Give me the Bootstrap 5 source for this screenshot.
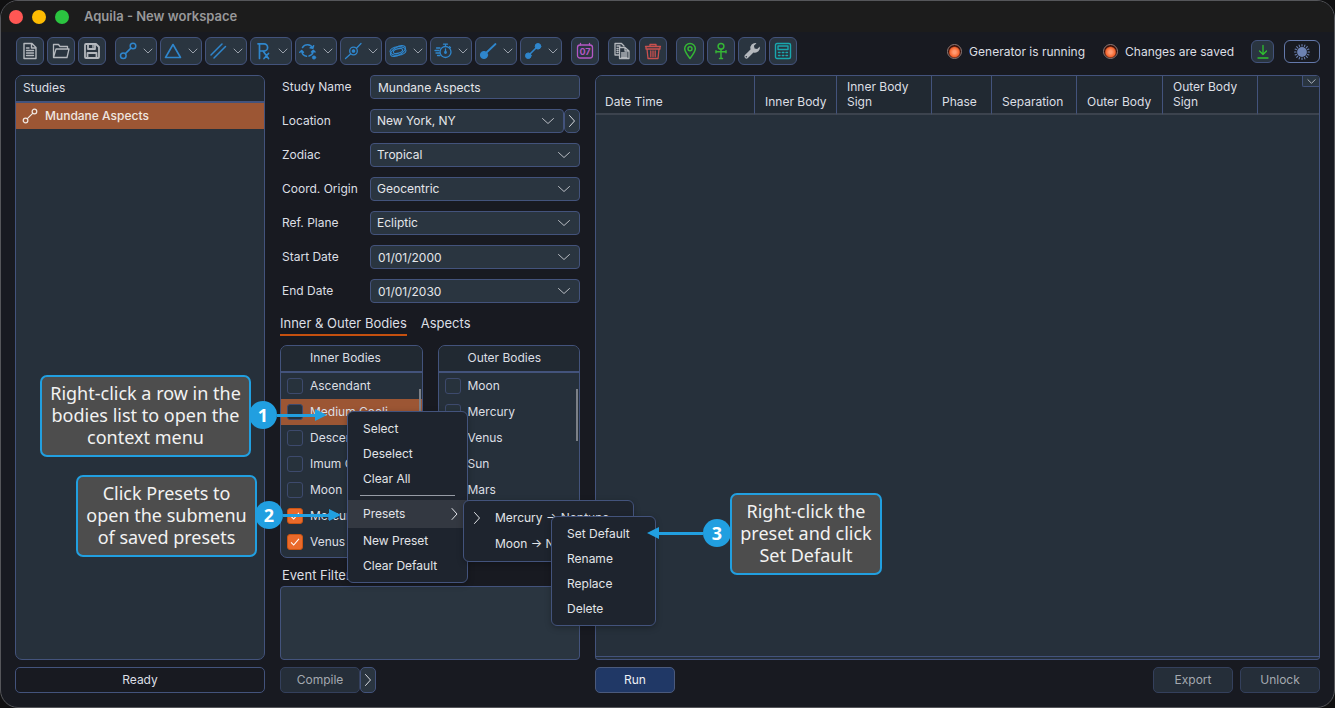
<!DOCTYPE html>
<html lang="en" data-bs-theme="dark">
<head>
<meta charset="utf-8">
<meta name="viewport" content="width=device-width, initial-scale=1">
<title>Aquila - New workspace</title>
<link href="https://cdn.jsdelivr.net/npm/bootstrap@5.3.0/dist/css/bootstrap.min.css" rel="stylesheet">
<style>
:root{--line:#43537c;--ink:#dcdfe4;--panel:#26303b;--head:#212932;--field:#2a3540;--app:#181a21;--accent:#9c5634;--tip:#219fe0}
body{background:#101011;color:var(--ink);font:12px/20px Inter,"Liberation Sans",sans-serif}
svg{display:block;fill:none;stroke:currentColor;stroke-linecap:round;stroke-linejoin:round}
button,input,select,textarea{font:inherit}
.app-window{min-height:100vh;background:var(--app);border:1px solid #55565a;border-radius:18px;overflow:hidden}
.titlebar{height:31px;background:#1c1c1c;padding-left:8px;color:#98989a;font-size:13px;font-weight:600}
.light{width:14px;height:14px;border-radius:50%;margin-right:9px}
.window-title{margin-left:6px;line-height:16px;padding-bottom:1px}
.toolbar{padding:5px 14px 0 15px;gap:9px;height:34px}
.tool-group{display:flex;gap:3px}
.tool{width:28px;height:28px;padding:0;border:1px solid var(--line);border-radius:6px;background:var(--field);color:#b4b8bd;display:flex;align-items:center;justify-content:center}
.tool.drop{width:42px;gap:6px;color:#2f86cc}
.tool .chev{color:#9aa1ab}
.tool.small-tool{width:23px;height:23px;color:#2fc02f;margin:0 10px 0 17px}
.tool.theme-tool{width:36px;height:23px;background:var(--app);border-color:#6479ab;color:#6d82b3}
.led{width:15px;height:15px;border-radius:50%;border:1px solid #8d7a76;background:radial-gradient(circle at 50% 55%,#ff9a70 0 15%,#f4652f 48%,#3a100a 62%);margin-right:7px}
.led + span + .led{margin-left:18px}
.workspace{display:grid;grid-template-columns:250px 300px minmax(0,1fr);grid-template-rows:1fr 26px;gap:7px 15px;padding:9px 14px 14px}
.pane{background:var(--panel);border:1px solid var(--line);border-radius:7px;overflow:hidden}
.pane-head{background:var(--head);border-bottom:2px solid var(--line);height:27px;line-height:24px;padding-left:7px}
.study{height:26px;background:var(--accent);color:#efe6e0;font-weight:500;padding-left:6px;gap:7px;width:100%;border:0;text-align:left}
.form-line{display:grid;grid-template-columns:88px minmax(0,1fr);padding-left:2px;height:24px;margin-bottom:10px}
.form-line label{line-height:23px}
.field{height:24px;min-height:24px;padding:0 6px 0 7px;border:1px solid var(--line);border-radius:4px;background-color:var(--field);color:#e4e6ea;font-size:12px;line-height:20px}
.field.form-select{background-image:url("data:image/svg+xml,%3csvg xmlns='http://www.w3.org/2000/svg' viewBox='0 0 14 14'%3e%3cpath fill='none' stroke='%23b8bcc2' stroke-linecap='round' d='M1.500 4.500l5.500 5 5.500-5'/%3e%3c/svg%3e");background-position:right 8px center;background-size:14px 14px;padding-right:26px}
select.field.form-select{padding-left:6px}
.side-btn{width:16px;padding:0;border:1px solid var(--line);border-radius:5px;background:var(--field);color:#d8dbe0;display:flex;align-items:center;justify-content:center}
.view-tabs{gap:14px;margin-top:2px;height:26px;font-size:13px}
.view-tabs a{color:var(--ink);text-decoration:none;line-height:16px;height:21px;border-bottom:2px solid transparent}
.view-tabs a.active{border-color:#c5500f}
.body-list{height:213px;position:relative;flex:1 1 0}
.body-list .pane-head{padding-left:29px}
.body-row{height:26px;padding-left:6px;gap:7px}
.body-row.current{background:var(--accent)}
.body-row .form-check-input{width:16px;height:16px;margin:0;border:1px solid #3d4a6d;border-radius:3px;background-color:#27323c;flex:none}
.body-row .form-check-input:checked{background-color:#ea6a2b;border-color:#c95413;background-image:url("data:image/svg+xml,%3csvg xmlns='http://www.w3.org/2000/svg' viewBox='0 0 16 16'%3e%3cpath fill='none' stroke='%23fff' stroke-width='1.200' d='M3.500 8.500l3 3 6-7'/%3e%3c/svg%3e")}
.scroll-thumb{position:absolute;right:1px;top:43px;width:2px;height:52px;background:#7c8087}
.filter-label{font-size:13px;line-height:20px;padding:7px 0 1px 2px;display:block}
.filter-box{flex:1 1 auto;resize:none;border-radius:4px;background:var(--field);border:1px solid var(--line)}
.pop{position:absolute;background:#1e242e;border:1px solid var(--line);border-radius:6px;padding:4px 0;margin:0;list-style:none;box-shadow:0 2px 6px rgba(0,0,0,.25);z-index:5}
.pop li{position:relative}
.pop button{display:flex;align-items:center;width:100%;height:25px;border:0;background:none;color:#e2e4e8;padding:0 0 0 15px;text-align:left;white-space:nowrap}
.pop hr{margin:4px 12px;border-color:#969ba5;opacity:1}
.pop-context{left:67px;top:66px;width:121px}
.pop-context .opened{height:28px;background:#333841;justify-content:space-between;padding-right:8px}
.pop-presets{left:115px;top:0;width:171px}
.pop-presets > li > button{height:26px;padding-left:7px;gap:12px}
.pop-presets svg{flex:none;width:12px}
.pop-preset{left:87px;top:11px;width:105px}
.results{display:flex;flex-direction:column;border-radius:7px 4px 3px 3px;position:relative}
.results-table{table-layout:fixed;width:100%;border-collapse:separate;border-spacing:0}
.results-table th{height:39px;background:var(--head);border-right:1px solid var(--line);border-bottom:2px solid #3c434e;font-weight:400;vertical-align:bottom;line-height:15px;padding:0 4px 4px 10px}
.results-table th:first-child{padding-left:9px}
.results-table th:last-child{border-right:0}
.results-end{margin-top:auto;border-top:1px solid var(--line);height:3px}
.column-btn{position:absolute;right:0;top:0;width:17px;height:11px;padding:0;border:1px solid var(--line);border-width:0 0 1px 1px;border-radius:0 0 0 2px;background:var(--field);color:#c0c4ca;display:flex;justify-content:center;align-items:center}
.foot-btn{width:80px;height:26px;padding:0;line-height:22px;border:1px solid #34405c;border-radius:5px;background:#252e39;color:#a4a9b0}
.foot-btn:hover{background:#2a3540}
.run-btn{background:#203866;border-color:#4b5a7c;color:#edf0f5}
.status{border:1px solid var(--line);border-radius:5px;text-align:center;line-height:23px}
.tip{position:absolute;z-index:10;background:#4d4d4d;border:2px solid var(--tip);border-radius:7px;color:#f2f2f2;font:18px/22px "Noto Sans","Open Sans",sans-serif;text-align:center;white-space:nowrap;height:82px;padding-top:5px}
.tip-mark{position:absolute;z-index:11;display:flex;align-items:center;color:var(--tip)}
.tip-mark b{width:28px;height:28px;border-radius:50%;background:var(--tip);color:#fff;font:700 18px/28px "Open Sans","Noto Sans",sans-serif;text-align:center}
.tip-mark i{height:3px;background:var(--tip)}
.tip-mark svg{fill:currentColor;stroke:none}
</style>
</head>
<body>
<svg width="0" height="0" class="position-absolute" aria-hidden="true">
  <symbol id="down" viewBox="0 0 10 10"><path d="M1 3l4 4 4-4"/></symbol>
  <symbol id="right" viewBox="0 0 8 14"><path d="M1.500 1.500L6.500 7l-5 5.500"/></symbol>
</svg>
<div class="app-window d-flex flex-column position-relative">
  <header class="titlebar d-flex align-items-center">
    <span class="light" style="background:#ff5754"></span><span class="light" style="background:#fdbc02"></span><span class="light" style="background:#2bc440"></span>
    <span class="window-title">Aquila - New workspace</span>
  </header>

  <nav class="toolbar d-flex" aria-label="Tools">
    <div class="tool-group">
      <button class="tool" aria-label="New"><svg width="18" height="18" viewBox="0 0 18 18" stroke-width="1.400"><path d="M3 1.500h8l4 4v11H3zM10.500 1.500V6H15M5.500 8.500h7M5.500 11h7M5.500 13.500h7M5.500 6h2.500"/></svg></button>
      <button class="tool" aria-label="Open"><svg width="18" height="18" viewBox="0 0 18 18" stroke-width="1.300"><path d="M1.500 15.500V2.500h5l1.500 2h7.500V7M1.500 15.500L4 7h13l-2 8.500z"/></svg></button>
      <button class="tool" aria-label="Save"><svg width="18" height="18" viewBox="0 0 18 18" stroke-width="1.800"><path d="M3 2h10l3 3v10q0 1-1 1H3q-1 0-1-1V3q0-1 1-1z"/><path d="M5 2v5h7V2M4.500 16v-5h9v5"/><path d="M10 3v2.500" stroke-width="1.400"/></svg></button>
    </div>
    <div class="tool-group">
      <button class="tool drop" aria-label="Aspects"><svg width="18" height="18" viewBox="0 0 18 18" stroke-width="1.500"><circle cx="4.300" cy="13.700" r="2.800"/><circle cx="14" cy="4" r="2.800"/><path d="M6.400 11.600l5.500-5.500"/></svg><svg class="chev" width="10" height="10"><use href="#down"/></svg></button>
      <button class="tool drop" aria-label="Triangle"><svg width="18" height="18" viewBox="0 0 18 18" stroke-width="1.600"><path d="M9 2.500L16.500 15.500h-15z"/></svg><svg class="chev" width="10" height="10"><use href="#down"/></svg></button>
      <button class="tool drop" aria-label="Parallels"><svg width="18" height="18" viewBox="0 0 18 18" stroke-width="1.500"><path d="M2 13L13 2M5 16L16.500 4.500"/></svg><svg class="chev" width="10" height="10"><use href="#down"/></svg></button>
      <button class="tool drop" aria-label="Retrogrades"><svg width="18" height="18" viewBox="0 0 18 18" stroke-width="1.700"><path d="M5.500 16.500V1.800h4.500a3.600 3.600 0 010 7.200H5.500M9 9l5.500 7.500M14.500 11.500l-4.500 5M4 1.800h1.500"/></svg><svg class="chev" width="10" height="10"><use href="#down"/></svg></button>
      <button class="tool drop" aria-label="Cycles"><svg width="18" height="18" viewBox="0 0 18 18" stroke-width="1.500"><path d="M3.500 5.500A5.800 5.800 0 0113.600 6M14.300 8.500A5.800 5.800 0 0110 14M7.500 14.300A5.800 5.800 0 012.700 9M11.200 5.800l2.600.5.800-2.600M.8 10.300l1.900-1.800 1.700 1.800M12.500 10l1.800-1.800L16 10"/><circle cx="15" cy="15.500" r="1.800" fill="currentColor" stroke-width=".5"/></svg><svg class="chev" width="10" height="10"><use href="#down"/></svg></button>
      <button class="tool drop" aria-label="Crossings"><svg width="18" height="18" viewBox="0 0 18 18" stroke-width="1.300"><circle cx="9.500" cy="9" r="3.800"/><circle cx="9.500" cy="9" r="1.200" fill="currentColor"/><path d="M1.500 16.500l5-4.500M12.500 6.200l4.500-4.700"/></svg><svg class="chev" width="10" height="10"><use href="#down"/></svg></button>
      <button class="tool drop" aria-label="Orbits"><svg width="18" height="18" viewBox="0 0 18 18" stroke-width="1.100"><ellipse cx="9" cy="9" rx="8" ry="4.300" transform="rotate(-4 9 9)"/><ellipse cx="9" cy="9" rx="8.300" ry="4" transform="rotate(-30 9 9)"/><ellipse cx="9" cy="9" rx="4.800" ry="2.200" transform="rotate(-16 9 9)"/></svg><svg class="chev" width="10" height="10"><use href="#down"/></svg></button>
      <button class="tool drop" aria-label="Speed"><svg width="18" height="18" viewBox="0 0 18 18" stroke-width="1.300"><circle cx="11.500" cy="10" r="5.500"/><path d="M11.500 4.500V2.500M9.500 2.200h4M11.500 7v3M15.500 4.800l1 1M2.500 6H6M1 8.500h4M2 11h3.500M3.500 13.500H6"/><circle cx="11.500" cy="10.500" r=".8"/></svg><svg class="chev" width="10" height="10"><use href="#down"/></svg></button>
      <button class="tool drop" aria-label="Single body"><svg width="18" height="18" viewBox="0 0 18 18" stroke-width="1.800"><circle cx="5" cy="13" r="3.600" fill="currentColor" stroke-width="1"/><path d="M7 11l9.500-9"/></svg><svg class="chev" width="10" height="10"><use href="#down"/></svg></button>
      <button class="tool drop" aria-label="Two bodies"><svg width="18" height="18" viewBox="0 0 18 18" stroke-width="1.600"><circle cx="4.300" cy="13.700" r="2.800" fill="currentColor" stroke-width="1"/><circle cx="14" cy="4.300" r="2.800" fill="currentColor" stroke-width="1"/><path d="M6 12l6-6"/></svg><svg class="chev" width="10" height="10"><use href="#down"/></svg></button>
    </div>
    <div class="tool-group">
      <button class="tool" aria-label="Calendar" style="color:#b457c4"><svg width="18" height="18" viewBox="0 0 18 18" stroke-width="1.300"><rect x="1.500" y="3" width="15" height="13" rx="2.500"/><path d="M4.500 1.500V3M13.500 1.500V3"/><text x="9" y="12.800" font-size="9" font-weight="700" text-anchor="middle" fill="currentColor" stroke="none">07</text></svg></button>
    </div>
    <div class="tool-group">
      <button class="tool" aria-label="Copy"><svg width="18" height="18" viewBox="0 0 18 18" stroke-width="1.300"><path d="M6 13H2V1.500h6.500L11 4"/><path d="M6.500 5.500H12L16 9v7.500H6.500zM12 5.500V9h4M8.500 11h5.500M8.500 13h5.500M8.500 15H14M4 4h3M4 6.500h1M4 8.500h1M4 10.500h1"/></svg></button>
      <button class="tool" aria-label="Delete study" style="color:#c9504e"><svg width="18" height="18" viewBox="0 0 18 18" stroke-width="1.300"><path d="M1.500 4.500h15M6 4.500V2.500h6v2M3 7l1 9.500h10L15 7zM6.800 9v5.500M9 9v5.500M11.200 9v5.500M2 4.500V7h14V4.500"/></svg></button>
    </div>
    <div class="tool-group">
      <button class="tool" aria-label="Locations" style="color:#35b535"><svg width="18" height="18" viewBox="0 0 18 18" stroke-width="1.500"><path d="M9 16.500C6 12.500 3.700 9.500 3.700 6.700a5.300 5.300 0 0110.600 0C14.300 9.500 12 12.500 9 16.500z"/><circle cx="9" cy="6.700" r="2"/></svg></button>
      <button class="tool" aria-label="Bodies" style="color:#35b535"><svg width="18" height="18" viewBox="0 0 18 18" stroke-width="1.500"><circle cx="9" cy="4.300" r="2.900"/><path d="M9 7.200v9.300M4 9.800h10M4 8.800v2M14 8.800v2M7.500 16.500h3"/></svg></button>
      <button class="tool" aria-label="Settings"><svg width="18" height="18" viewBox="0 0 18 18"><path d="M16.800 4.500l-2.600 2.600-2.600-.7-.7-2.600 2.600-2.600a5 5 0 00-6 6.300L1.700 13.300a2.200 2.200 0 003 3l5.800-5.800a5 5 0 006.300-6z" fill="currentColor" stroke="none"/><circle cx="3.300" cy="14.700" r=".8" fill="#2a3540" stroke="none"/></svg></button>
      <button class="tool" aria-label="Calculator" style="color:#19a7ad"><svg width="18" height="18" viewBox="0 0 18 18" stroke-width="1.400"><rect x="1.500" y="1.500" width="15" height="15" rx="1.500"/><rect x="4" y="4" width="10" height="3.500"/><path d="M4.500 10.500h1.500M8.300 10.500h1.500M12 10.500h1.500M4.500 13.500h1.500M8.300 13.500h1.500M12 13.500h1.500"/></svg></button>
    </div>
    <div class="d-flex align-items-center ms-auto">
      <span class="led"></span><span>Generator is running</span>
      <span class="led"></span><span>Changes are saved</span>
      <button class="tool small-tool" aria-label="Download"><svg width="14" height="16" viewBox="0 0 14 16" stroke-width="1.300"><path d="M7 1.500v9M3.500 7L7 10.500 10.500 7M2 14h10"/></svg></button>
      <button class="tool theme-tool" aria-label="Light theme"><svg width="18" height="18" viewBox="0 0 18 18" stroke-width="1.100"><circle cx="9" cy="9" r="4.900" fill="currentColor" stroke="none"/><path d="M9 1.500V3M9 15v1.500M1.500 9H3M15 9h1.500M3.700 3.700l1.100 1.100M13.200 13.200l1.100 1.100M3.700 14.300l1.100-1.100M13.200 4.800l1.100-1.100M6.100 2.100l.5 1.300M11.400 14.600l.5 1.300M2.100 6.100l1.300.5M14.600 11.400l1.300.5M2.100 11.900l1.300-.5M14.600 6.600l1.300-.5M6.100 15.900l.5-1.300M11.400 3.400l.5-1.300"/></svg></button>
    </div>
  </nav>

  <main class="workspace flex-grow-1">
    <section class="pane">
      <div class="pane-head">Studies</div>
      <button class="study d-flex align-items-center"><svg width="16" height="16" viewBox="0 0 18 18" stroke-width="1.400"><circle cx="4" cy="14" r="2.600"/><circle cx="14" cy="4" r="2.600"/><path d="M6 12l6-6"/></svg>Mundane Aspects</button>
    </section>

    <section class="d-flex flex-column">
      <div class="form-line"><label for="name">Study Name</label><input id="name" class="field form-control" value="Mundane Aspects"></div>
      <div class="form-line"><label for="loc">Location</label><div class="d-flex"><select id="loc" class="field form-select"><option>New York, NY</option></select><button class="side-btn flex-shrink-0" aria-label="Edit location"><svg width="8" height="14"><use href="#right"/></svg></button></div></div>
      <div class="form-line"><label for="zod">Zodiac</label><select id="zod" class="field form-select"><option>Tropical</option></select></div>
      <div class="form-line"><label for="org">Coord. Origin</label><select id="org" class="field form-select"><option>Geocentric</option></select></div>
      <div class="form-line"><label for="ref">Ref. Plane</label><select id="ref" class="field form-select"><option>Ecliptic</option></select></div>
      <div class="form-line"><label for="start">Start Date</label><input id="start" class="field form-select" value="01/01/2000"></div>
      <div class="form-line"><label for="end">End Date</label><input id="end" class="field form-select" value="01/01/2030"></div>
      <nav class="view-tabs d-flex"><a class="active" href="#">Inner &amp; Outer Bodies</a><a href="#">Aspects</a></nav>

      <div class="d-flex position-relative mt-1" style="gap:15px">
        <div class="pane body-list">
          <div class="pane-head">Inner Bodies</div>
          <label class="body-row d-flex align-items-center"><input type="checkbox" class="form-check-input">Ascendant</label>
          <label class="body-row d-flex align-items-center current"><input type="checkbox" class="form-check-input">Medium Coeli</label>
          <label class="body-row d-flex align-items-center"><input type="checkbox" class="form-check-input">Descendant</label>
          <label class="body-row d-flex align-items-center"><input type="checkbox" class="form-check-input">Imum Coeli</label>
          <label class="body-row d-flex align-items-center"><input type="checkbox" class="form-check-input">Moon</label>
          <label class="body-row d-flex align-items-center"><input type="checkbox" class="form-check-input" checked>Mercury</label>
          <label class="body-row d-flex align-items-center"><input type="checkbox" class="form-check-input" checked>Venus</label>
          <span class="scroll-thumb"></span>
        </div>
        <div class="pane body-list">
          <div class="pane-head">Outer Bodies</div>
          <label class="body-row d-flex align-items-center"><input type="checkbox" class="form-check-input">Moon</label>
          <label class="body-row d-flex align-items-center"><input type="checkbox" class="form-check-input">Mercury</label>
          <label class="body-row d-flex align-items-center"><input type="checkbox" class="form-check-input">Venus</label>
          <label class="body-row d-flex align-items-center"><input type="checkbox" class="form-check-input">Sun</label>
          <label class="body-row d-flex align-items-center"><input type="checkbox" class="form-check-input">Mars</label>
          <span class="scroll-thumb"></span>
        </div>
        <ul class="pop pop-context">
          <li><button>Select</button></li>
          <li><button>Deselect</button></li>
          <li><button>Clear All</button></li>
          <li><hr></li>
          <li><button class="opened">Presets<svg width="9" height="14" viewBox="0 0 8 14"><use href="#right"/></svg></button>
            <ul class="pop pop-presets">
              <li><button><svg width="9" height="14"><use href="#right"/></svg>Mercury → Neptune</button>
                <ul class="pop pop-preset">
                  <li><button>Set Default</button></li>
                  <li><button>Rename</button></li>
                  <li><button>Replace</button></li>
                  <li><button>Delete</button></li>
                </ul>
              </li>
              <li><button><svg width="9" height="14"></svg>Moon → Neptune</button></li>
            </ul>
          </li>
          <li><button>New Preset</button></li>
          <li><button>Clear Default</button></li>
        </ul>
      </div>
      <label class="filter-label" for="filters">Event Filters</label>
      <textarea id="filters" class="filter-box"></textarea>
    </section>

    <section class="pane results">
      <table class="results-table">
        <colgroup><col style="width:159px"><col style="width:82px"><col style="width:95px"><col style="width:60px"><col style="width:85px"><col style="width:86px"><col style="width:95px"><col></colgroup>
        <thead><tr><th>Date Time</th><th>Inner Body</th><th>Inner Body Sign</th><th>Phase</th><th>Separation</th><th>Outer Body</th><th>Outer Body Sign</th><th></th></tr></thead>
      </table>
      <button class="column-btn" aria-label="Choose columns"><svg width="9" height="9" viewBox="0 0 10 10"><use href="#down"/></svg></button>
      <div class="results-end"></div>
    </section>

    <div class="status">Ready</div>
    <div class="d-flex"><button class="foot-btn">Compile</button><button class="side-btn" aria-label="Compile options"><svg width="8" height="14"><use href="#right"/></svg></button></div>
    <div class="d-flex" style="gap:7px"><button class="foot-btn run-btn me-auto">Run</button><button class="foot-btn">Export</button><button class="foot-btn">Unlock</button></div>
  </main>

  <div class="tip" style="left:39px;top:374px;width:211px">Right-click a row in the<br>bodies list to open the<br>context menu</div>
  <div class="tip-mark" style="left:248px;top:400px"><b>1</b><i style="width:38px"></i><svg width="12" height="12" viewBox="0 0 12 12"><path d="M0 0l12 6-12 6z"/></svg></div>
  <div class="tip" style="left:75px;top:474px;width:181px">Click Presets to<br>open the submenu<br>of saved presets</div>
  <div class="tip-mark" style="left:254px;top:500px"><b>2</b><i style="width:46px"></i><svg width="12" height="12" viewBox="0 0 12 12"><path d="M0 0l12 6-12 6z"/></svg></div>
  <div class="tip" style="left:729px;top:492px;width:152px">Right-click the<br>preset and click<br>Set Default</div>
  <div class="tip-mark" style="left:646px;top:518px"><svg width="12" height="12" viewBox="0 0 12 12"><path d="M12 0L0 6l12 6z"/></svg><i style="width:44px"></i><b>3</b></div>
</div>
<script src="https://cdn.jsdelivr.net/npm/bootstrap@5.3.0/dist/js/bootstrap.bundle.min.js"></script>
</body>
</html>
